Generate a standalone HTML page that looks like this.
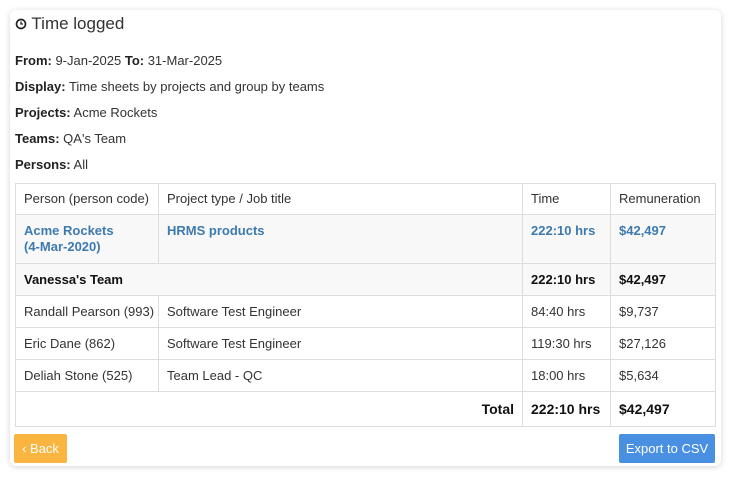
<!DOCTYPE html>
<html><head><style>
body{margin:0;width:732px;height:477px;background:#fff;font-family:"Liberation Sans",sans-serif;color:#222;position:relative;overflow:hidden}
.card{position:absolute;left:10px;top:10px;width:711px;height:456px;border-radius:6px;box-shadow:0 1px 6px rgba(0,0,0,.18);background:#fff}
.t{position:absolute;left:15px;top:14px;font-size:17px;color:#333}
.l{position:absolute;left:15px;font-size:13px;color:#333}
.l b{color:#222}
table{position:absolute;left:15px;top:183px;border-collapse:collapse;font-size:13px;width:700px;table-layout:fixed}
td{border:1px solid #ddd;padding:0 8px;vertical-align:top;color:#333;line-height:16px;white-space:nowrap;overflow:hidden}
.bl{color:#3d7ab0;font-weight:bold}
.g{background:#f8f8f8}
.btn{position:absolute;top:434px;height:29px;line-height:29px;font-size:13px;color:#fff;border-radius:2px}
</style></head><body>
<div class="card"></div>
<div class="t"><svg width="12" height="12" viewBox="0 0 12 12" style="vertical-align:-1px"><circle cx="6" cy="6" r="4.5" fill="none" stroke="#222" stroke-width="1.7"/><path d="M6 3.5V6H8" fill="none" stroke="#222" stroke-width="1.3"/></svg> Time logged</div>
<div class="l" style="top:53px"><b>From:</b> 9-Jan-2025 <b>To:</b> 31-Mar-2025</div>
<div class="l" style="top:79px"><b>Display:</b> Time sheets by projects and group by teams</div>
<div class="l" style="top:105px"><b>Projects:</b> Acme Rockets</div>
<div class="l" style="top:131px"><b>Teams:</b> QA's Team</div>
<div class="l" style="top:157px"><b>Persons:</b> All</div>
<table>
<colgroup><col style="width:143px"><col style="width:364px"><col style="width:88px"><col style="width:105px"></colgroup>
<tr style="height:31px"><td style="padding-top:7px">Person (person code)</td><td style="padding-top:7px">Project type / Job title</td><td style="padding-top:7px">Time</td><td style="padding-top:7px">Remuneration</td></tr>
<tr class="g" style="height:49px"><td class="bl" style="padding-top:8px">Acme Rockets<br>(4-Mar-2020)</td><td class="bl" style="padding-top:8px">HRMS products</td><td class="bl" style="padding-top:8px">222:10 hrs</td><td class="bl" style="padding-top:8px">$42,497</td></tr>
<tr class="g" style="height:32px"><td colspan="2" style="padding-top:8px;font-weight:bold;color:#111">Vanessa's Team</td><td style="padding-top:8px;font-weight:bold;color:#111">222:10 hrs</td><td style="padding-top:8px;font-weight:bold;color:#111">$42,497</td></tr>
<tr style="height:32px"><td style="padding-top:8px">Randall Pearson (993)</td><td style="padding-top:8px">Software Test Engineer</td><td style="padding-top:8px">84:40 hrs</td><td style="padding-top:8px">$9,737</td></tr>
<tr style="height:32px"><td style="padding-top:8px">Eric Dane (862)</td><td style="padding-top:8px">Software Test Engineer</td><td style="padding-top:8px">119:30 hrs</td><td style="padding-top:8px">$27,126</td></tr>
<tr style="height:32px"><td style="padding-top:8px">Deliah Stone (525)</td><td style="padding-top:8px">Team Lead - QC</td><td style="padding-top:8px">18:00 hrs</td><td style="padding-top:8px">$5,634</td></tr>
<tr style="height:35px;font-size:14px;font-weight:bold"><td colspan="2" style="text-align:right;padding-top:9px;color:#111">Total</td><td style="padding-top:9px;color:#111">222:10 hrs</td><td style="padding-top:9px;color:#111">$42,497</td></tr>
</table>
<div class="btn" style="left:14px;width:53px;background:#f9b53f;text-align:center">‹ Back</div>
<div class="btn" style="left:619px;width:96px;background:#4a90e2;text-align:center">Export to CSV</div>
</body></html>
